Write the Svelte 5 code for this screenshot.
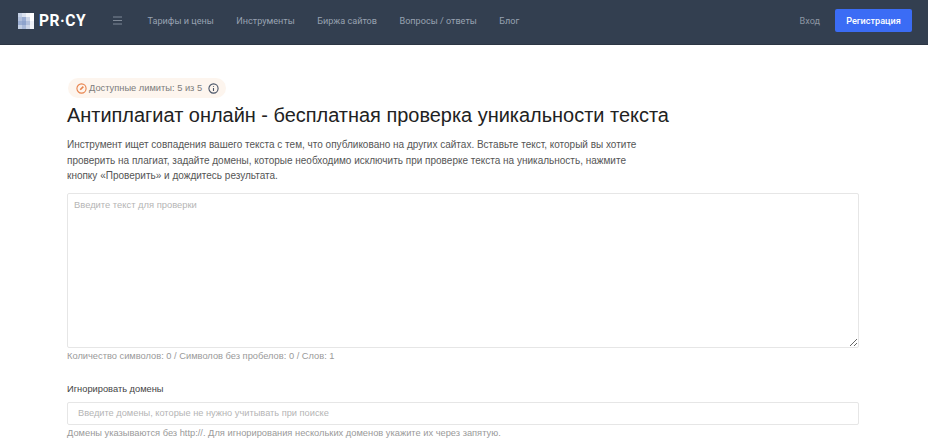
<script>
  const nav = ['Тарифы и цены', 'Инструменты', 'Биржа сайтов', 'Вопросы / ответы', 'Блог'];
  // logo mosaic tints, 4x4
  const cells = [
    '#c3cfe4', '#dbe2ef', '#f2f4f8', '#ffffff',
    '#b2c0dc', '#9aadd2', '#cdd6e8', '#ffffff',
    '#9aadd2', '#8ea3cc', '#b2c0dc', '#eef1f7',
    '#c3cfe4', '#a9b9d8', '#cdd6e8', '#f2f4f8'
  ];
</script>

<header class="topbar">
  <a class="logo" href="#top">
    <span class="mosaic">
      {#each cells as c}
        <i style="background: {c}"></i>
      {/each}
    </span>
    <span class="logo-text">PR·CY</span>
  </a>
  <svg class="burger" width="9" height="9" viewBox="0 0 9 9" fill="none" stroke="#7f8997" stroke-width="1">
    <path d="M0 1h9M0 4.5h9M0 8h9" />
  </svg>
  <nav class="nav">
    {#each nav as item}
      <a href="#top">{item}</a>
    {/each}
  </nav>
  <a class="login" href="#top">Вход</a>
  <a class="register" href="#top">Регистрация</a>
</header>

<main class="page">
  <div class="limits">
    <svg width="11" height="11" viewBox="0 0 12 12" fill="none" stroke="#e8834d" stroke-width="1.2">
      <circle cx="6" cy="6" r="5" />
      <path d="M4.6 7.4 8 4" stroke-width="1.8" />
    </svg>
    <span>Доступные лимиты: 5 из 5</span>
    <svg class="info" width="11" height="11" viewBox="0 0 12 12" fill="none" stroke="#4a5568" stroke-width="1.2">
      <circle cx="6" cy="6" r="5" />
      <path d="M6 5.4v3.2M6 3.2v1" />
    </svg>
  </div>

  <h1>Антиплагиат онлайн - бесплатная проверка уникальности текста</h1>
  <p class="lead">
    Инструмент ищет совпадения вашего текста с тем, что опубликовано на других сайтах. Вставьте текст, который вы хотите
    проверить на плагиат, задайте домены, которые необходимо исключить при проверке текста на уникальность, нажмите
    кнопку «Проверить» и дождитесь результата.
  </p>

  <textarea placeholder="Введите текст для проверки"></textarea>
  <div class="hint">Количество символов: 0 / Символов без пробелов: 0 / Слов: 1</div>

  <label class="field-label" for="domains">Игнорировать домены</label>
  <input id="domains" type="text" placeholder="Введите домены, которые не нужно учитывать при поиске" />
  <div class="hint">Домены указываются без http://. Для игнорирования нескольких доменов укажите их через запятую.</div>
</main>

<style>
  :global(body) {
    margin: 0;
    background: #fff;
    overflow: hidden;
    font-family: "Liberation Sans", Arial, sans-serif;
  }

  a {
    text-decoration: none;
  }

  .topbar {
    height: 45px;
    box-sizing: border-box;
    background: #333f50;
    border-bottom: 1px solid #2c3644;
    display: flex;
    align-items: center;
    padding: 0 16px 3px 18px;
  }

  .logo {
    display: flex;
    align-items: center;
    gap: 5px;
  }

  .mosaic {
    display: grid;
    grid-template-columns: repeat(4, 4px);
    grid-auto-rows: 4px;
    width: 16px;
    height: 16px;
  }

  .mosaic i {
    display: block;
  }

  .logo-text {
    font-family: Roboto, "Liberation Sans", sans-serif;
    font-weight: 700;
    font-size: 15.6px;
    letter-spacing: 0.5px;
    color: #fff;
  }

  .burger {
    margin-left: 27px;
  }

  .nav {
    display: flex;
    gap: 22.5px;
    margin-left: 25.5px;
    flex: 1;
  }

  .nav a {
    font-family: Roboto, sans-serif;
    font-size: 9.1px;
    color: #98a2b0;
  }

  .login {
    font-family: Roboto, sans-serif;
    font-size: 9.1px;
    color: #8d96a3;
    margin-right: 15px;
  }

  .register {
    font-family: Roboto, sans-serif;
    font-size: 9.1px;
    font-weight: 500;
    color: #fff;
    background: #3b6cf5;
    border-radius: 2px;
    width: 77px;
    height: 23px;
    display: flex;
    align-items: center;
    justify-content: center;
  }

  .page {
    padding: 33px 69px 0 67px;
  }

  .limits {
    display: inline-flex;
    align-items: center;
    height: 20px;
    margin-left: 1px;
    padding: 0 7px 0 8px;
    gap: 2px;
    background: #fdf5ee;
    border-radius: 10px;
    font-size: 9.3px;
    color: #7c7c7c;
    vertical-align: top;
  }

  .limits .info {
    margin-left: 4px;
  }

  h1 {
    margin: 3px 0 0;
    font-size: 19.95px;
    font-weight: 400;
    line-height: 28px;
    color: #222;
  }

  .lead {
    margin: 8px 0 0;
    width: 590px;
    font-size: 10px;
    line-height: 15.5px;
    color: #555;
  }

  textarea,
  input {
    display: block;
    width: 100%;
    box-sizing: border-box;
    border: 1px solid #e6e6e6;
    border-radius: 2px;
    font-family: inherit;
    outline: none;
    background: #fff;
  }

  textarea {
    height: 155px;
    margin-top: 9px;
    padding: 5px 6px;
    font-size: 9.4px;
  }

  input {
    height: 23.5px;
    padding: 0 10px;
    font-size: 9.25px;
  }

  ::placeholder {
    color: #b5b5b5;
    opacity: 1;
  }

  .hint {
    font-size: 9.3px;
    line-height: 14px;
    color: #9a9a9a;
    margin-top: 1px;
  }

  .field-label {
    display: block;
    margin-top: 19px;
    margin-bottom: 6px;
    font-size: 9.3px;
    line-height: 14px;
    color: #444;
  }
</style>
